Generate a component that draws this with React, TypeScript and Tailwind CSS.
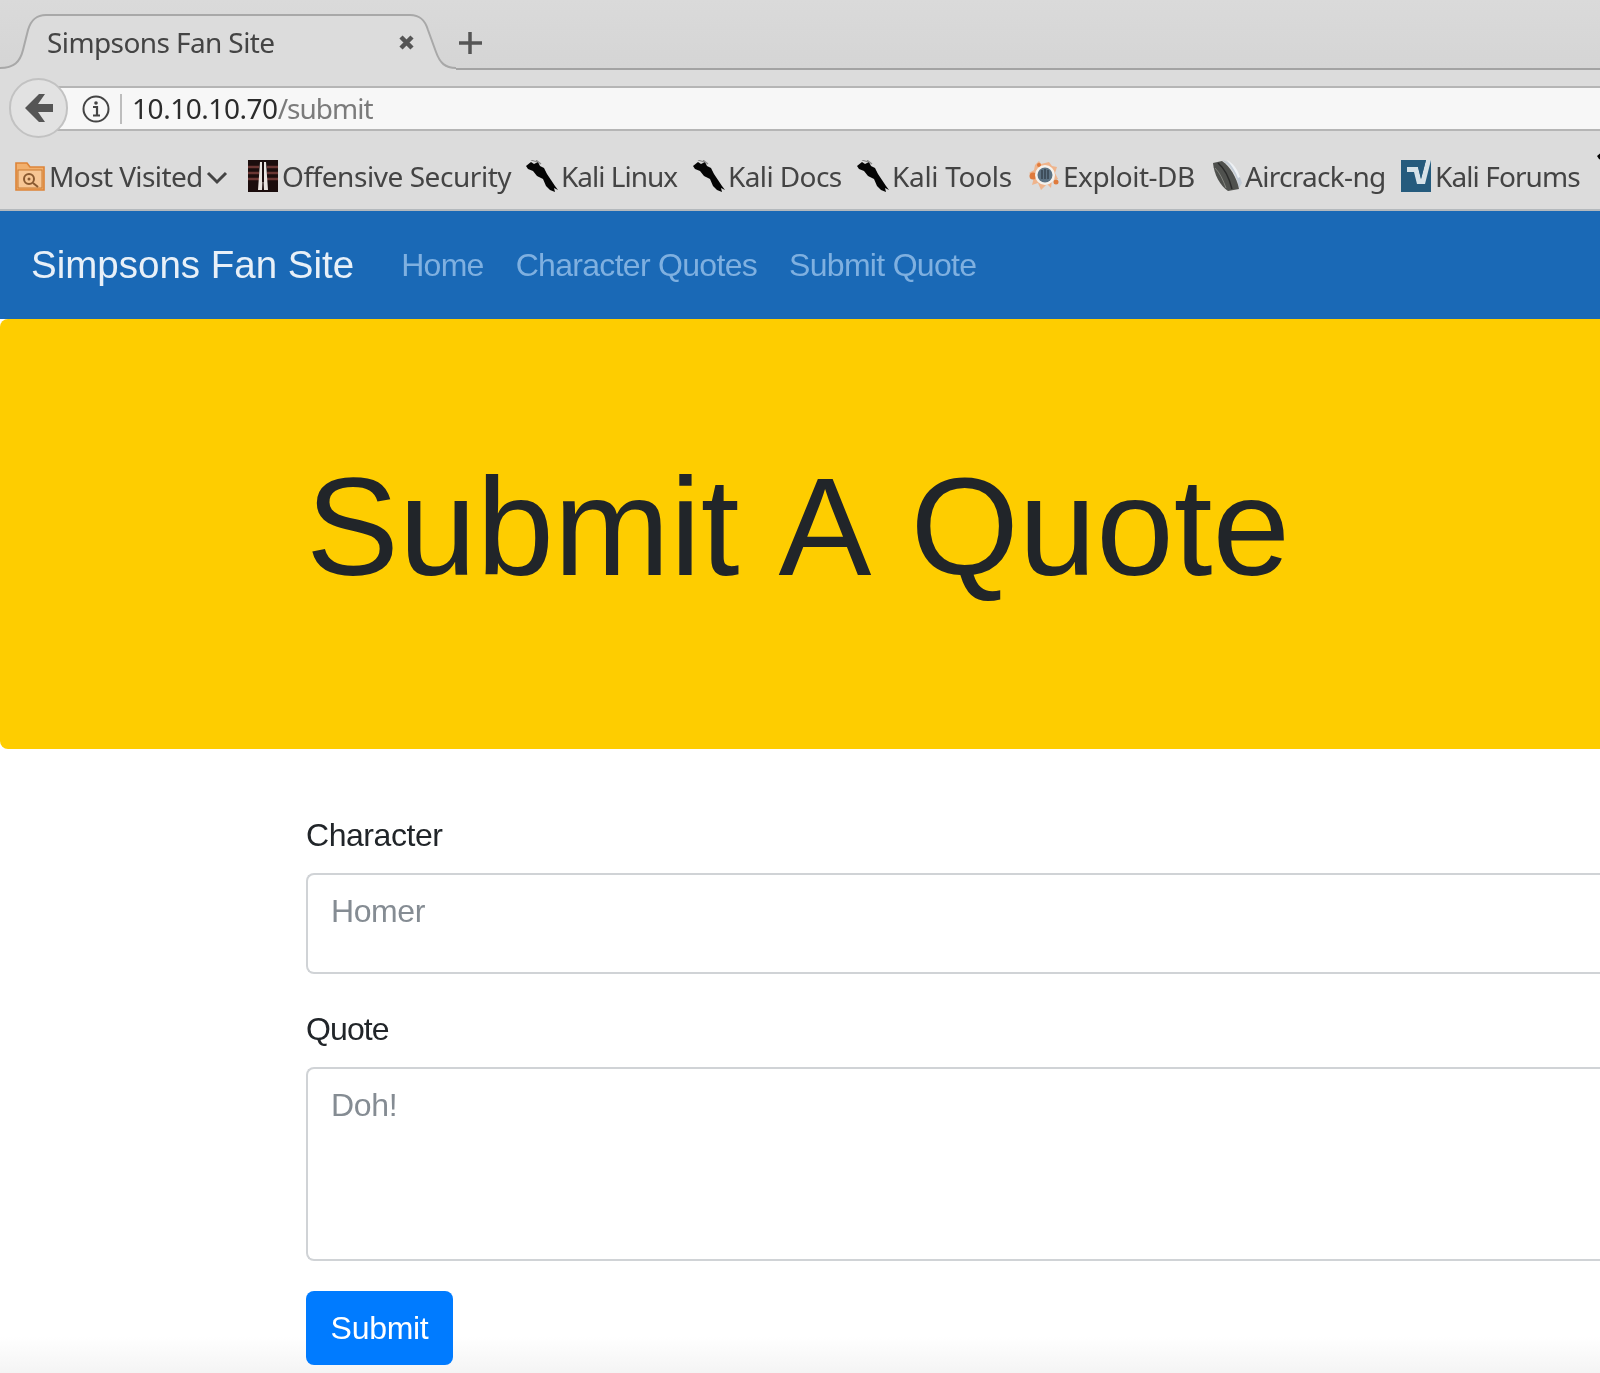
import React from "react";

const chromeFont = "font-['Noto_Sans',sans-serif]";
const pageFont = "font-['Liberation_Sans',Arial,sans-serif]";

const FolderIcon = () => (
  <svg width="30" height="30" viewBox="0 0 30 30" className="shrink-0">
    <path d="M1 2h11l3 4h14v23H1z" fill="#f2b06d" stroke="#dd8438" strokeWidth="1.6" />
    <rect x="3" y="9" width="24" height="18" fill="#f7c694" stroke="#c97a33" />
    <circle cx="14" cy="18" r="5" fill="none" stroke="#8a5a30" strokeWidth="2" />
    <circle cx="14" cy="18" r="1.5" fill="#8a5a30" />
    <path d="M18 22l5 4" stroke="#8a5a30" strokeWidth="2" />
  </svg>
);

const OffsecIcon = () => (
  <svg width="30" height="32" viewBox="0 0 30 32" className="shrink-0">
    <rect width="30" height="32" fill="#1b0d0d" />
    <path d="M0 7h11M0 13h11M0 19h11M19 7h11M19 13h11M19 19h11" stroke="#6a3633" strokeWidth="2.4" />
    <path d="M12 2h6l2 28h-4l-1-19-1 19h-4z" fill="#e9e4e0" />
    <path d="M14 2h2v20h-2z" fill="#1b0d0d" />
  </svg>
);

const KaliIcon = () => (
  <svg width="32" height="32" viewBox="0 0 32 32" className="shrink-0">
    <path
      d="M0 6L5 2L8 4L12 2L14 6L18 8L21 14L25 20L29 26L32 30L28 28L29 32L24 30L20 26L17 19L11 16L7 11L2 9z"
      fill="#050505"
    />
    <path d="M5 0l6 2M10 0l5 4" stroke="#8a8a8a" strokeWidth="1.2" />
  </svg>
);

const ExploitIcon = () => (
  <svg width="32" height="32" viewBox="0 0 32 32" className="shrink-0">
    <path d="M7 5l4-4 2 3 8-2 3 4 5 1-2 6 3 6-6 1-1 8-4-4-6 6-3-7-6 2 2-8-5-4 5-3z" fill="#efb48c" />
    <circle cx="5" cy="16" r="3.5" fill="#df7a3c" />
    <circle cx="28" cy="22" r="2.5" fill="#df7a3c" />
    <circle cx="11" cy="5" r="2" fill="#df7a3c" />
    <circle cx="17" cy="15" r="10" fill="#f4f2ee" />
    <circle cx="17" cy="15" r="7.5" fill="#5c7283" />
    <path d="M14 10v9M17 9v10M20 10v9" stroke="#34434f" strokeWidth="1.5" />
  </svg>
);

const AircrackIcon = () => (
  <svg width="30" height="32" viewBox="0 0 30 32" className="shrink-0">
    <path d="M10 0c9 2 17 11 20 23l-3 5C25 15 19 6 10 0z" fill="#c3ccd6" />
    <path d="M15 0c6 3 11 10 13 17l-2 1C24 12 20 6 15 0z" fill="#eef1f4" />
    <path d="M1 3L10 1C18 6 25 18 27 29L16 31C8 26 2 14 1 3z" fill="#4f514e" />
    <path d="M6 3c6 5 11 14 14 26" stroke="#2a2b2a" strokeWidth="1.5" fill="none" />
    <path d="M3 8c5 5 8 12 11 20" stroke="#83857f" strokeWidth="1" fill="none" />
  </svg>
);

const ForumsIcon = () => (
  <svg width="30" height="32" viewBox="0 0 30 32" className="shrink-0">
    <rect width="30" height="32" fill="#255b7d" />
    <path d="M25 0h5l-6 24H16l-3-12H6V7h11l3 12z" fill="#d6e2e8" />
    <path d="M11 0h14l-5 19-3-12H6z" fill="#255b7d" />
  </svg>
);

const bookmarks = [
  { label: "Most Visited", icon: <FolderIcon />, w: "w-[233px]", t: "tracking-[-0.6px]", m: "ml-[4px]", arrow: true },
  { label: "Offensive Security", icon: <OffsecIcon />, w: "w-[278px]", t: "tracking-[-0.45px]", m: "ml-[4px]" },
  { label: "Kali Linux", icon: <KaliIcon />, w: "w-[167px]", t: "tracking-[-1px]", m: "ml-[3px]" },
  { label: "Kali Docs", icon: <KaliIcon />, w: "w-[164px]", t: "tracking-[-0.6px]", m: "ml-[3px]" },
  { label: "Kali Tools", icon: <KaliIcon />, w: "w-[171px]", t: "tracking-[-0.3px]", m: "ml-[3px]" },
  { label: "Exploit-DB", icon: <ExploitIcon />, w: "w-[184px]", t: "tracking-[-0.5px]", m: "ml-[3px]" },
  { label: "Aircrack-ng", icon: <AircrackIcon />, w: "w-[189px]", t: "tracking-[-0.7px]", m: "ml-[3px]" },
  { label: "Kali Forums", icon: <ForumsIcon />, w: "w-[195px]", t: "tracking-[-0.9px]", m: "ml-[4px]" },
];

function BrowserChrome() {
  return (
    <div className={`${chromeFont} bg-[#dcdcdc] text-[#3d3d3d]`}>
      {/* tab strip */}
      <div className="relative flex h-[70px] items-start border-b-2 border-[#a3a3a3] bg-gradient-to-b from-[#dadada] to-[#d5d5d5]">
        <svg width="500" height="70" viewBox="0 0 500 70" className="absolute left-0 top-0">
          <path
            d="M0 68C14 68 20 62 23 50L28 30C31 20 36 15 46 15H410C420 15 425 20 428 30L436 52C440 63 445 68 456 68V70H0z"
            fill="#dcdcdc"
          />
          <path
            d="M0 68C14 68 20 62 23 50L28 30C31 20 36 15 46 15H410C420 15 425 20 428 30L436 52C440 63 445 68 456 68"
            fill="none"
            stroke="#a8a8a8"
            strokeWidth="2"
          />
          <path d="M401 37l11 11M412 37l-11 11" stroke="#555" strokeWidth="4.5" />
          <path d="M470 32v22M459 43h23" stroke="#555" strokeWidth="3.5" />
        </svg>
        <span className="relative ml-[47px] mt-[22px] text-[28px] leading-[40px] tracking-[-0.6px] text-[#444]">
          Simpsons Fan Site
        </span>
      </div>

      {/* url bar */}
      <div className="relative flex h-[60px] items-start pl-[55px] pt-[16px]">
        <div className="flex h-[45px] w-full items-center border-y-2 border-[#b5b5b5] bg-[#f7f7f7] pl-[26px]">
          <svg width="30" height="30" viewBox="0 0 30 30" className="shrink-0">
            <circle cx="15" cy="15" r="12.5" fill="none" stroke="#444" strokeWidth="2" />
            <circle cx="15" cy="9" r="1.8" fill="#444" />
            <path d="M12 13h4v8M12 21.5h7" stroke="#444" strokeWidth="2.2" fill="none" />
          </svg>
          <div className="ml-[9px] h-[30px] w-[2px] bg-[#bdbdbd]" />
          <span className="ml-[10px] mt-[-2px] text-[28px] leading-none tracking-[-0.45px] text-[#2b2b2b]">
            10.10.10.70<span className="tracking-[-1px] text-[#7b7b7b]">/submit</span>
          </span>
        </div>
        <div className="absolute left-[9px] top-[8px] flex h-[60px] w-[59px] items-center justify-center rounded-full border-2 border-[#c2c2c2] bg-[#e2e2e2]">
          <svg width="30" height="32" viewBox="0 0 30 32">
            <path d="M1 16L15 2h6l-7 10h15v8H14l7 10h-6z" fill="#555" />
          </svg>
        </div>
      </div>

      {/* bookmarks */}
      <div className="relative flex h-[81px] items-center overflow-hidden border-b-2 border-[#b4b9bd] pl-[15px] pt-[12px]">
        {bookmarks.map((b) => (
          <div key={b.label} className={`flex ${b.w} shrink-0 items-center`}>
            {b.icon}
            <span className={`${b.m} whitespace-nowrap text-[28px] leading-none ${b.t} text-[#444]`}>
              {b.label}
            </span>
            {b.arrow && (
              <svg width="22" height="14" viewBox="0 0 22 14" className="ml-[3px] mt-1 shrink-0">
                <path d="M2 2l9 9 9-9" fill="none" stroke="#444" strokeWidth="3" />
              </svg>
            )}
          </div>
        ))}
        <div className="ml-[1px] mt-[-20px] shrink-0">
          <KaliIcon />
        </div>
      </div>
    </div>
  );
}

function Navbar() {
  return (
    <nav className={`${pageFont} flex h-[108px] items-center bg-[#1a69b6] pl-[31px]`}>
      <a className="text-[38.5px] leading-none text-white/90">Simpsons Fan Site</a>
      <div className="ml-[47px] flex gap-[32px] text-[32px] leading-none tracking-[-0.7px] text-[#7fb0e0]">
        <a>Home</a>
        <a>Character Quotes</a>
        <a>Submit Quote</a>
      </div>
    </nav>
  );
}

export default function App() {
  return (
    <div className="relative h-[1373px] w-[1600px] overflow-hidden bg-white blur-[0.4px]">
      <BrowserChrome />
      <Navbar />
      <div className="flex h-[430px] items-center rounded-l-lg bg-[#fecd00] pb-[12px] pl-[306px]">
        <h1 className={`${pageFont} text-[139.3px] font-normal leading-none text-[#212529] [word-spacing:8px]`}>
          Submit A Quote
        </h1>
      </div>

      <div className="pointer-events-none absolute inset-x-0 bottom-0 h-[36px] bg-gradient-to-b from-transparent to-[#f4f4f4]" />

      <form className={`${pageFont} relative pl-[306px] pt-[68px]`}>
        <label className="block text-[32px] leading-[36px] tracking-[-0.45px] text-[#212529]">Character</label>
        <div className="mt-[20px] h-[101px] w-full rounded-l-lg border-2 border-r-0 border-[#d0d3d6] bg-white pl-[23px] pt-[18px] text-[32px] leading-[36px] tracking-[-0.4px] text-[#858c93]">
          Homer
        </div>
        <label className="mt-[37px] block text-[32px] leading-[36px] tracking-[-0.9px] text-[#212529]">Quote</label>
        <div className="mt-[20px] h-[194px] w-full rounded-l-lg border-2 border-r-0 border-[#d0d3d6] bg-white pl-[23px] pt-[18px] text-[32px] leading-[36px] tracking-[-0.3px] text-[#858c93]">
          Doh!
        </div>
        <button
          type="button"
          className="mt-[30px] flex h-[74px] w-[147px] items-center justify-center rounded-lg bg-[#007bff] text-[32px] leading-none tracking-[-0.3px] text-white"
        >
          Submit
        </button>
      </form>
    </div>
  );
}
